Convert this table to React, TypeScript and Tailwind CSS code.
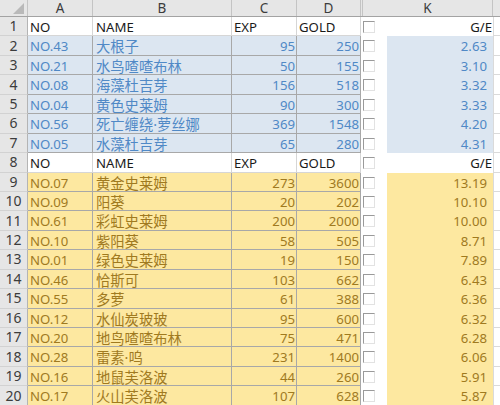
import React from "react";

type Kind = "head" | "blue" | "yellow";
type Row = { n: number; kind: Kind; no?: string; name?: string; exp?: string; gold?: string; ge?: string };

const rows: Row[] = [
  { n: 1, kind: "head" },
  { n: 2, kind: "blue", no: "NO.43", name: "大根子", exp: "95", gold: "250", ge: "2.63" },
  { n: 3, kind: "blue", no: "NO.21", name: "水鸟喳喳布林", exp: "50", gold: "155", ge: "3.10" },
  { n: 4, kind: "blue", no: "NO.08", name: "海藻杜吉芽", exp: "156", gold: "518", ge: "3.32" },
  { n: 5, kind: "blue", no: "NO.04", name: "黄色史莱姆", exp: "90", gold: "300", ge: "3.33" },
  { n: 6, kind: "blue", no: "NO.56", name: "死亡缠绕·萝丝娜", exp: "369", gold: "1548", ge: "4.20" },
  { n: 7, kind: "blue", no: "NO.05", name: "水藻杜吉芽", exp: "65", gold: "280", ge: "4.31" },
  { n: 8, kind: "head" },
  { n: 9, kind: "yellow", no: "NO.07", name: "黄金史莱姆", exp: "273", gold: "3600", ge: "13.19" },
  { n: 10, kind: "yellow", no: "NO.09", name: "阳葵", exp: "20", gold: "202", ge: "10.10" },
  { n: 11, kind: "yellow", no: "NO.61", name: "彩虹史莱姆", exp: "200", gold: "2000", ge: "10.00" },
  { n: 12, kind: "yellow", no: "NO.10", name: "紫阳葵", exp: "58", gold: "505", ge: "8.71" },
  { n: 13, kind: "yellow", no: "NO.01", name: "绿色史莱姆", exp: "19", gold: "150", ge: "7.89" },
  { n: 14, kind: "yellow", no: "NO.46", name: "恰斯可", exp: "103", gold: "662", ge: "6.43" },
  { n: 15, kind: "yellow", no: "NO.55", name: "多萝", exp: "61", gold: "388", ge: "6.36" },
  { n: 16, kind: "yellow", no: "NO.12", name: "水仙炭玻玻", exp: "95", gold: "600", ge: "6.32" },
  { n: 17, kind: "yellow", no: "NO.20", name: "地鸟喳喳布林", exp: "75", gold: "471", ge: "6.28" },
  { n: 18, kind: "yellow", no: "NO.28", name: "雷素·呜", exp: "231", gold: "1400", ge: "6.06" },
  { n: 19, kind: "yellow", no: "NO.16", name: "地鼠芙洛波", exp: "44", gold: "260", ge: "5.91" },
  { n: 20, kind: "yellow", no: "NO.17", name: "火山芙洛波", exp: "107", gold: "628", ge: "5.87" },
];

function Checkbox() {
  return (
    <div className="ml-[2px] mt-[4px] h-[12px] w-[12px] border border-t-[#9a9a9a] border-l-[#9a9a9a] border-r-[#e2e2e2] border-b-[#e2e2e2] bg-white" />
  );
}

function DataRow({ r }: { r: Row }) {
  const isHead = r.kind === "head";
  const fill = r.kind === "blue" ? "bg-[#dce6f1]" : r.kind === "yellow" ? "bg-[#fde8a0]" : "bg-white";
  const color = r.kind === "blue" ? "text-[#5089c6]" : r.kind === "yellow" ? "text-[#a07a1f]" : "text-[#1a1a1a]";
  const line = isHead ? "border-[#d6d6d6]" : "border-[#a8a8a8]";
  const cell = `h-full shrink-0 border-r border-b ${line} ${fill} ${color} pt-[3px] leading-[15.5px] whitespace-nowrap overflow-hidden`;
  return (
    <div className="flex h-[19.45px] text-[13.2px]">
      <div className="flex h-full w-[28px] shrink-0 items-center justify-center border-r border-b border-r-[#b4b4b4] border-b-[#d2d2d2] bg-[#e6e6e6] text-[14px] text-[#3c3c3c] leading-[18px]">
        {r.n}
      </div>
      <div className={`${cell} w-[65px] pl-[2px]`}>{isHead ? "NO" : r.no}</div>
      {isHead ? (
        <div className={`${cell} w-[139px] pl-[3px]`}>NAME</div>
      ) : (
        <div className={`h-full w-[139px] shrink-0 border-r border-b ${line} ${fill} ${color} pl-[3px] pt-[3px] text-[14.3px] leading-[15.5px] whitespace-nowrap overflow-hidden`}>
          {r.name}
        </div>
      )}
      <div className={`${cell} w-[65px] ${isHead ? "pl-[2px]" : "pr-[1px] text-right"}`}>{isHead ? "EXP" : r.exp}</div>
      <div className={`${cell} w-[64px] ${isHead ? "pl-[2px]" : "pr-[1px] text-right"}`}>{isHead ? "GOLD" : r.gold}</div>
      <div className="h-full w-[26px] shrink-0 bg-white">
        <Checkbox />
      </div>
      <div
        className={`h-full w-[106px] shrink-0 ${fill} ${color} pt-[3px] text-right leading-[15.5px] whitespace-nowrap ${
          isHead ? "pr-[1px]" : "pr-[6px]"
        }`}
      >
        {isHead ? "G/E" : r.ge}
      </div>
      <div className="h-full flex-1 border-l border-b border-[#dadada] bg-white" />
    </div>
  );
}

export default function App() {
  const colHead = "flex h-full shrink-0 items-center justify-center border-r border-[#c4c4c4] text-[13.5px] text-[#3c3c3c] leading-[16px]";
  return (
    <div
      className="h-[405px] w-[500px] overflow-hidden bg-white"
      style={{ fontFamily: '"Noto Sans", "Noto Sans CJK SC", sans-serif' }}
    >
      <div className="flex h-[17px] border-b border-[#a3a3a3] bg-[#e6e6e6]">
        <div className="relative h-full w-[28px] shrink-0 border-r border-[#c4c4c4]">
          <svg className="absolute right-[3px] bottom-[2px]" width="11" height="11" viewBox="0 0 11 11">
            <polygon points="11,0 11,11 0,11" fill="#b9b9b9" />
          </svg>
        </div>
        <div className={`${colHead} w-[65px]`}>A</div>
        <div className={`${colHead} w-[139px]`}>B</div>
        <div className={`${colHead} w-[65px]`}>C</div>
        <div className={`${colHead} w-[64px]`}>D</div>
        <div className="h-full w-[2px] shrink-0 border-r border-[#c4c4c4]" />
        <div className={`${colHead} w-[130px]`}>K</div>
        <div className="h-full flex-1" />
      </div>
      {rows.map((r) => (
        <DataRow key={r.n} r={r} />
      ))}
    </div>
  );
}
